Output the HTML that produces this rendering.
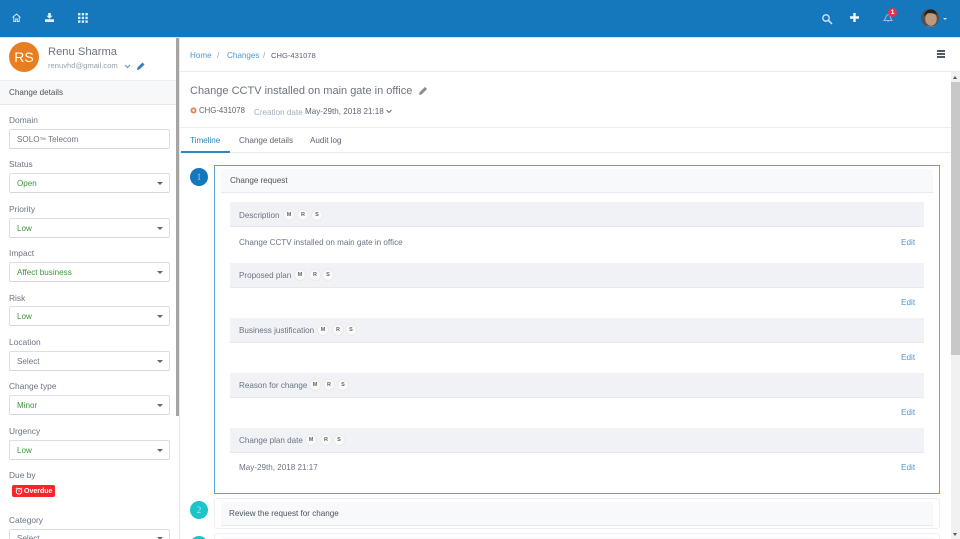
<!DOCTYPE html>
<html><head><meta charset="utf-8"><style>
html,body{margin:0;padding:0;width:960px;height:539px;overflow:hidden;background:#fff;font-family:"Liberation Sans",sans-serif;color:#5d6670;font-size:8.100px}
div,svg{position:absolute;box-sizing:border-box}
#w{left:0;top:0;width:960px;height:539px;overflow:hidden;background:#fff}
.t{white-space:nowrap;line-height:12px}
.l{left:9px;color:#6b7480;font-size:8.400px}
.f{left:9px;width:161px;height:20px;border:1px solid #dadfe5;border-bottom-color:#d3d8df;border-radius:2px;background:#fff}
.v{left:17px;font-size:8.100px;color:#3c963c}
.ar{left:157px;width:0;height:0;border-left:3px solid transparent;border-right:3px solid transparent;border-top:3px solid #666}
.bd{left:230px;width:694px;height:25px;background:#f1f2f6;border-bottom:1px solid #e6e8ee}
.h{left:239px;font-size:8.100px;color:#6b7480;margin-top:1px}
.e{left:901px;font-size:8.200px;color:#4f97d0;margin-top:1px}
.p{width:12px;height:12px;border:1px solid #ebebeb;border-radius:50%;background:#fafafa;font-size:5.500px;font-weight:bold;line-height:10px;text-align:center;color:#666}
</style></head><body><div id="w">
<div style="left:0;top:0;width:960px;height:38px;background:#1578bd;border-bottom:1px solid #d5e3ee"></div>
<svg style="left:12px;top:13px" width="9" height="9" viewBox="0 0 9 9"><path d="M.5 4.500 4.500 1l4 3.500M1.800 4v4.500h1.900V6h1.600v2.500h1.900V4" fill="none" stroke="#d5e8f5" stroke-width="1"/></svg>
<svg style="left:45px;top:13px" width="9" height="9" viewBox="0 0 9 9"><path d="M3.200 0h2.600v2.800h1.800L4.500 5.800 1.400 2.800h1.800zM0 6.200h9V9H0z" fill="#e3eff8"/></svg>
<svg style="left:78px;top:13px" width="10" height="10" viewBox="0 0 10 10" fill="#dcecf7"><rect width="2.400" height="2.400"/><rect x="3.700" width="2.400" height="2.400"/><rect x="7.400" width="2.400" height="2.400"/><rect y="3.700" width="2.400" height="2.400"/><rect x="3.700" y="3.700" width="2.400" height="2.400"/><rect x="7.400" y="3.700" width="2.400" height="2.400"/><rect y="7.400" width="2.400" height="2.400"/><rect x="3.700" y="7.400" width="2.400" height="2.400"/><rect x="7.400" y="7.400" width="2.400" height="2.400"/></svg>
<svg style="left:822px;top:14px" width="11" height="11" viewBox="0 0 11 11"><circle cx="4" cy="4" r="3.200" fill="none" stroke="#d5e8f5" stroke-width="1.300"/><path d="M6.500 6.500 10 10" stroke="#d5e8f5" stroke-width="1.500"/></svg>
<svg style="left:850px;top:13px" width="9" height="9" viewBox="0 0 9 9"><path d="M3.300 0h2.400v3.300H9v2.400H5.700V9H3.300V5.700H0V3.300h3.300z" fill="#eef6fb"/></svg>
<svg style="left:883px;top:13px" width="10" height="9" viewBox="0 0 10 9"><path d="M1 7.500C3 6 2.500 3 4 2c1-.7 2.500-.5 3 .5.500 1.500.5 3.500 2 5zM4 8h2" fill="none" stroke="#8fc3e6" stroke-width="1"/></svg>
<div style="left:888px;top:8px;width:9px;height:9px;border-radius:50%;background:#e8324a;color:#fff;font-size:6.500px;font-weight:bold;text-align:center;line-height:9px">1</div>
<svg style="left:921px;top:9px" width="18" height="18" viewBox="0 0 18 18"><circle cx="9" cy="9" r="9" fill="#57504a"/><ellipse cx="10" cy="10" rx="5.800" ry="6.800" fill="#bb9a80"/><path d="M3 7C3.500 2.500 6.500 .5 10 .5s5.500 2 6 5.500c-2-1.500-7.500-2.500-10-1.500-1 1-2 2.500-3 2.500z" fill="#262120"/><path d="M4 18c1-1.500 10-1.500 11 0z" fill="#77706a"/></svg>
<div style="left:943px;top:18px;width:0;height:0;border-left:2.500px solid transparent;border-right:2.500px solid transparent;border-top:2.500px solid #cfe4f3"></div>

<div style="left:179px;top:38px;width:1px;height:501px;background:#e6e8ec"></div>
<div style="left:176px;top:38px;width:3px;height:378px;background:#a5a5a5"></div>
<div style="left:9px;top:42px;width:30px;height:30px;border-radius:50%;background:#e87e22;color:#fff;font-size:14px;text-align:center;line-height:30px">RS</div>
<div class="t" style="left:48px;top:46px;font-size:11.200px;color:#6b7480">Renu Sharma</div>
<div class="t" style="left:48px;top:60px;font-size:7.600px;color:#99a1ab">renuvhd@gmail.com</div>
<svg style="left:124px;top:64px" width="7" height="5" viewBox="0 0 7 5"><path d="M1 1l2.500 2.500L6 1" fill="none" stroke="#5b8fb8" stroke-width="1"/></svg>
<svg style="left:137px;top:62px" width="8" height="8" viewBox="0 0 8 8"><path d="M0 8l.5-2.500L5.500.5l2 2-5 5z" fill="#3b7fb8"/></svg>
<div style="left:0;top:80px;width:176px;height:25px;background:#f7f8fa;border-top:1px solid #eceef1;border-bottom:1px solid #e6e8ec"></div>
<div class="t" style="left:9px;top:87px;font-size:8.100px;color:#4c545c">Change details</div>

<div class="t l" style="top:114px">Domain</div><div class="f" style="top:129px"></div><div class="t v" style="top:134px;color:#6b7480">SOLO<small style="font-size:6.500px">™</small> Telecom</div>
<div class="t l" style="top:158px">Status</div><div class="f" style="top:173px"></div><div class="t v" style="top:178px">Open</div><div class="ar" style="top:182px"></div>
<div class="t l" style="top:203px">Priority</div><div class="f" style="top:218px"></div><div class="t v" style="top:223px">Low</div><div class="ar" style="top:227px"></div>
<div class="t l" style="top:247px">Impact</div><div class="f" style="top:262px"></div><div class="t v" style="top:267px">Affect business</div><div class="ar" style="top:271px"></div>
<div class="t l" style="top:292px">Risk</div><div class="f" style="top:306px"></div><div class="t v" style="top:311px">Low</div><div class="ar" style="top:315px"></div>
<div class="t l" style="top:336px">Location</div><div class="f" style="top:351px"></div><div class="t v" style="top:356px;color:#6b7480">Select</div><div class="ar" style="top:360px"></div>
<div class="t l" style="top:380px">Change type</div><div class="f" style="top:395px"></div><div class="t v" style="top:400px">Minor</div><div class="ar" style="top:404px"></div>
<div class="t l" style="top:425px">Urgency</div><div class="f" style="top:440px"></div><div class="t v" style="top:445px">Low</div><div class="ar" style="top:449px"></div>
<div class="t l" style="top:469px">Due by</div>
<div style="left:12px;top:485px;width:43px;height:12px;background:#f8242c;border-radius:2px"></div>
<svg style="left:15px;top:487px" width="8" height="8" viewBox="0 0 8 8"><circle cx="4" cy="4.300" r="2.800" fill="none" stroke="#fff" stroke-width=".9"/><path d="M4 2.800v1.500h1.200M.8 1.800 2 .8M7.200 1.800 6 .8" fill="none" stroke="#fff" stroke-width=".7"/></svg>
<div class="t" style="left:24px;top:486px;font-size:7px;font-weight:bold;color:#fff">Overdue</div>
<div class="t l" style="top:514px">Category</div><div class="f" style="top:529px"></div><div class="t v" style="top:533px;color:#6b7480">Select</div><div class="ar" style="top:537px"></div>

<div style="left:180px;top:71px;width:780px;height:1px;background:#e8eaed"></div>
<div class="t" style="left:190px;top:50px;color:#4f97d0">Home</div>
<div class="t" style="left:217px;top:50px;color:#99a1ab">/</div>
<div class="t" style="left:227px;top:50px;color:#4f97d0">Changes</div>
<div class="t" style="left:263px;top:50px;color:#99a1ab">/</div>
<div class="t" style="left:271px;top:50px;font-size:7.600px;color:#5d6670">CHG-431078</div>
<div style="left:937px;top:50px;width:8px;height:2px;background:#4d5a64"></div><div style="left:937px;top:53px;width:8px;height:2px;background:#4d5a64"></div><div style="left:937px;top:56px;width:8px;height:2px;background:#4d5a64"></div>

<div class="t" style="left:190px;top:85px;font-size:11px;color:#6b7480">Change CCTV installed on main gate in office</div>
<svg style="left:419px;top:86px" width="9" height="9" viewBox="0 0 9 9"><path d="M0 9l.6-2.700L6 .9l2.100 2.100L2.700 8.400z" fill="#8a8f94"/></svg>
<svg style="left:190px;top:107px" width="7" height="7" viewBox="0 0 7 7"><circle cx="3.500" cy="3.500" r="3" fill="#e8844a"/><circle cx="3.500" cy="3.500" r="1.200" fill="#fff"/></svg>
<div class="t" style="left:199px;top:105px;font-size:7.800px;color:#5d6670">CHG-431078</div>
<div class="t" style="left:254px;top:107px;color:#a6adb5">Creation date</div>
<div class="t" style="left:305px;top:106px;color:#5d6670">May-29th, 2018 21:18</div>
<svg style="left:386px;top:109px" width="6" height="5" viewBox="0 0 6 5"><path d="M.5 1 3 3.500 5.500 1" fill="none" stroke="#666" stroke-width=".9"/></svg>

<div style="left:180px;top:127px;width:771px;height:1px;background:#eceef0"></div>
<div style="left:180px;top:152px;width:771px;height:1px;background:#e8eaed"></div>
<div style="left:181px;top:151px;width:49px;height:2px;background:#2a87c8"></div>
<div class="t" style="left:190px;top:135px;color:#2a87c8">Timeline</div>
<div class="t" style="left:239px;top:135px;color:#5d6670">Change details</div>
<div class="t" style="left:310px;top:135px;color:#5d6670">Audit log</div>

<div style="left:190px;top:168px;width:18px;height:18px;border-radius:50%;background:#1578bd;color:#a9cfe9;font:9px/18px 'Liberation Serif',serif;text-align:center">1</div>
<div style="left:214px;top:165px;width:726px;height:329px;border:1px solid #5ba6d9"></div>
<div style="left:221px;top:169px;width:712px;height:24px;background:#f8f9fb;border-bottom:1px solid #e6e9ef"></div>
<div class="t" style="left:230px;top:175px;color:#4c545c">Change request</div>

<div class="bd" style="top:202px"></div><div class="t h" style="top:209px">Description</div>
<div class="p" style="left:283px;top:209px">M</div><div class="p" style="left:297px;top:209px">R</div><div class="p" style="left:311px;top:209px">S</div>
<div class="t h" style="top:236px">Change CCTV installed on main gate in office</div><div class="t e" style="top:236px">Edit</div>

<div class="bd" style="top:263px"></div><div class="t h" style="top:269px">Proposed plan</div>
<div class="p" style="left:294px;top:269px">M</div><div class="p" style="left:309px;top:269px">R</div><div class="p" style="left:322px;top:269px">S</div>
<div class="t e" style="top:296px">Edit</div>

<div class="bd" style="top:318px"></div><div class="t h" style="top:324px">Business justification</div>
<div class="p" style="left:317px;top:324px">M</div><div class="p" style="left:332px;top:324px">R</div><div class="p" style="left:345px;top:324px">S</div>
<div class="t e" style="top:351px">Edit</div>

<div class="bd" style="top:373px"></div><div class="t h" style="top:379px">Reason for change</div>
<div class="p" style="left:309px;top:379px">M</div><div class="p" style="left:323px;top:379px">R</div><div class="p" style="left:337px;top:379px">S</div>
<div class="t e" style="top:406px">Edit</div>

<div class="bd" style="top:428px"></div><div class="t h" style="top:434px">Change plan date</div>
<div class="p" style="left:305px;top:434px">M</div><div class="p" style="left:320px;top:434px">R</div><div class="p" style="left:333px;top:434px">S</div>
<div class="t h" style="top:461px">May-29th, 2018 21:17</div><div class="t e" style="top:461px">Edit</div>

<div style="left:190px;top:501px;width:18px;height:18px;border-radius:50%;background:#1cc5c8;color:#a8ecee;font:9px/18px 'Liberation Serif',serif;text-align:center">2</div>
<div style="left:214px;top:498px;width:726px;height:31px;border:1px solid #eef0f3;border-radius:3px"></div>
<div style="left:221px;top:502px;width:712px;height:24px;background:#f8f9fb;border-bottom:1px solid #e6e9ef"></div>
<div class="t" style="left:229px;top:508px;color:#4c545c">Review the request for change</div>
<div style="left:190px;top:536px;width:18px;height:18px;border-radius:50%;background:#1cc5c8"></div>
<div style="left:214px;top:533px;width:726px;height:20px;border:1px solid #eef0f3;border-radius:3px"></div>
<div style="left:221px;top:537px;width:712px;height:10px;background:#f8f9fb"></div>

<div style="left:951px;top:72px;width:9px;height:467px;background:#f1f1f1"></div>
<div style="left:951px;top:82px;width:9px;height:273px;background:#c8c8c8"></div>
<div style="left:953px;top:76px;width:0;height:0;border-left:2.500px solid transparent;border-right:2.500px solid transparent;border-bottom:3px solid #555"></div>
<div style="left:953px;top:533px;width:0;height:0;border-left:2.500px solid transparent;border-right:2.500px solid transparent;border-top:3px solid #555"></div>
</div></body></html>
